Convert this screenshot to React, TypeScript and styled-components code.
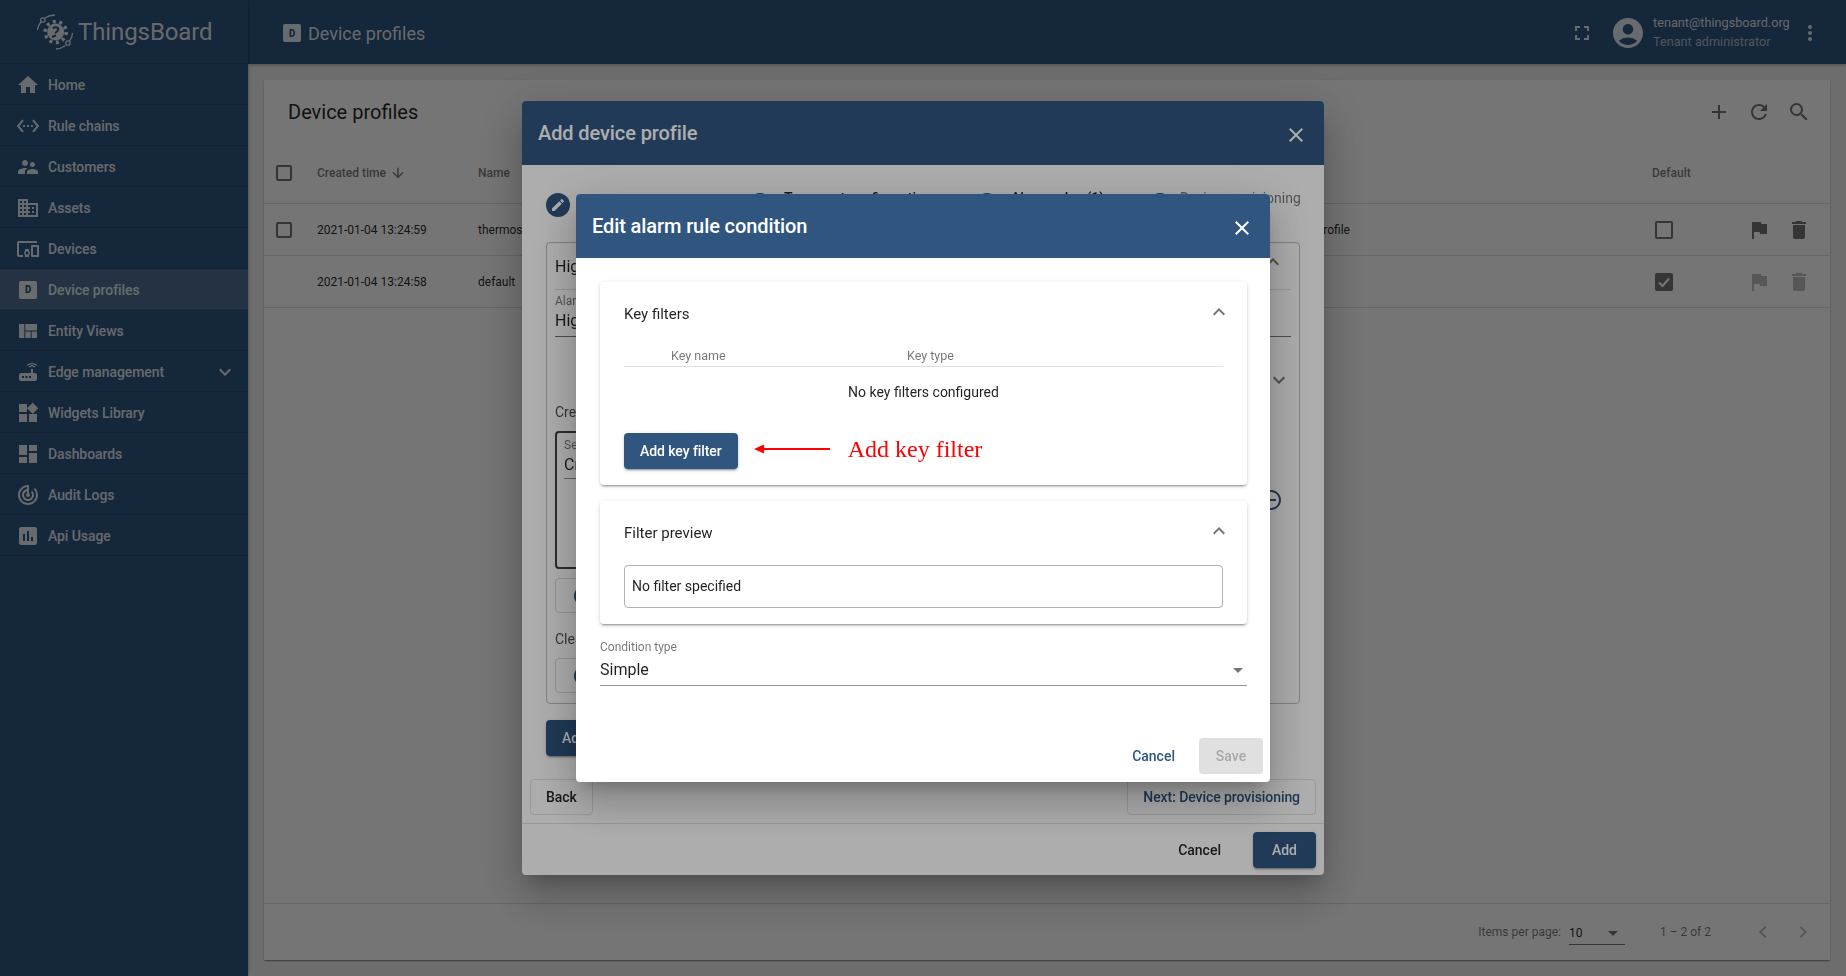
import React from "react";
import styled, { createGlobalStyle } from "styled-components";
import {
  MdHome, MdSettingsEthernet, MdSupervisorAccount, MdDomain, MdDevicesOther, MdViewQuilt, MdRouter,
  MdWidgets, MdDashboard, MdTrackChanges, MdAssessment, MdExpandMore, MdExpandLess, MdFullscreen,
  MdAccountCircle, MdMoreVert, MdAdd, MdRefresh, MdSearch, MdFlag, MdDelete, MdArrowDownward,
  MdArrowDropDown, MdChevronLeft, MdChevronRight, MdClose, MdEdit, MdRemoveCircleOutline, MdAddCircleOutline,
} from "react-icons/md";

const PRIMARY = "#305680";

const Global = createGlobalStyle`
  html, body { margin: 0; padding: 0; height: 100%; overflow: hidden; }
  body { font-family: Roboto, "Liberation Sans", sans-serif; background: #eeeeee; color: rgba(0,0,0,.87); font-size: 14px; }
  * { box-sizing: border-box; }
`;

const Shell = styled.div`
  display: grid;
  grid-template-columns: 248px 1fr;
  height: 976px;
`;
const Sidebar = styled.aside`
  background: ${PRIMARY};
  display: flex;
  flex-direction: column;
  box-shadow: 0 0 3px rgba(0,0,0,.4);
  z-index: 2;
`;
const Logo = styled.div`
  height: 64px;
  display: flex;
  align-items: center;
  padding-left: 36px;
  gap: 4px;
  color: rgba(255,255,255,.87);
  font-size: 24px;
  letter-spacing: -0.1px;
  border-bottom: 1px solid rgba(0,0,0,.12);
`;
const NavRow = styled.div<{ $active?: boolean }>`
  height: 41px;
  display: flex;
  align-items: center;
  padding: 1px 11px 0 16px;
  gap: 8px;
  font-weight: 500;
  font-size: 14px;
  letter-spacing: -0.08px;
  color: rgba(255,255,255,.87);
  border-bottom: 1px solid rgba(0,0,0,.12);
  background: ${(p) => (p.$active ? "rgba(255,255,255,.15)" : "transparent")};
  svg { flex: none; }
`;
const NavLabel = styled.span`
  flex: 1;
`;
const Badge = styled.span<{ $size: number }>`
  width: ${(p) => p.$size}px;
  height: ${(p) => p.$size}px;
  margin: 0 ${(p) => (24 - p.$size) / 2}px;
  background: rgba(255,255,255,.87);
  border-radius: 2px;
  color: ${PRIMARY};
  font-size: 11px;
  font-weight: 700;
  font-family: "DejaVu Sans Mono", monospace;
  display: flex;
  align-items: center;
  justify-content: center;
  flex: none;
`;
const Main = styled.main`
  display: flex;
  flex-direction: column;
  min-width: 0;
`;
const TopBar = styled.header`
  height: 64px;
  background: ${PRIMARY};
  color: rgba(255,255,255,.87);
  display: flex;
  align-items: center;
  padding: 2px 24px 0 32px;
  box-shadow: 0 1px 3px rgba(0,0,0,.3);
`;
const TopTitle = styled.div`
  flex: 1;
  display: flex;
  align-items: center;
  font-size: 18px;
  gap: 4px;
`;
const TopUser = styled.div`
  display: flex;
  flex-direction: column;
  gap: 5px;
  width: 145px;
  margin: -2px 0 0 7px;
  font-size: 12.7px;
  line-height: 14px;
  color: rgba(255,255,255,.85);
`;
const TopUserRole = styled.span`
  color: rgba(255,255,255,.6);
`;
const TopSpacer = styled.span`
  width: 16px;
`;
const Content = styled.div`
  flex: 1;
  padding: 16px;
  min-height: 0;
`;
const Card = styled.section`
  height: 100%;
  background: #fff;
  display: flex;
  flex-direction: column;
  box-shadow: 0 2px 1px -1px rgba(0,0,0,.2), 0 1px 1px 0 rgba(0,0,0,.14), 0 1px 3px 0 rgba(0,0,0,.12);
`;
const CardToolbar = styled.div`
  height: 64px;
  display: flex;
  align-items: center;
  padding: 0 11px 0 24px;
  font-size: 20px;
  flex: none;
`;
const CardTitle = styled.div`
  flex: 1;
`;
const IconCell = styled.span<{ $muted?: boolean }>`
  width: 40px;
  height: 40px;
  display: flex;
  align-items: center;
  justify-content: center;
  color: rgba(0,0,0,${(p) => (p.$muted ? 0.26 : 0.54)});
  flex: none;
`;
const TableRow = styled.div<{ $height: number; $lift?: number }>`
  height: ${(p) => p.$height}px;
  display: grid;
  grid-template-columns: 41px 161px 736px 438px 87px 40px 40px;
  align-items: center;
  padding: 0 0 ${(p) => p.$lift ?? 0}px 12px;
  border-bottom: 1px solid rgba(0,0,0,.12);
  font-size: 12px;
  flex: none;
`;
const HeadCell = styled.div`
  display: flex;
  align-items: center;
  gap: 4px;
  font-weight: 500;
  color: rgba(0,0,0,.54);
`;
const Check = styled.span<{ $size: number; $checked?: boolean; $inset?: number }>`
  width: ${(p) => p.$size}px;
  height: ${(p) => p.$size}px;
  margin-left: ${(p) => p.$inset ?? 0}px;
  border: ${(p) => (p.$checked ? "0" : "2px solid rgba(0,0,0,.54)")};
  border-radius: 2px;
  background: ${(p) => (p.$checked ? "rgba(0,0,0,.54)" : "transparent")};
  display: flex;
  align-items: center;
  justify-content: center;
`;
const CardFill = styled.div`
  flex: 1;
  border-bottom: 1px solid rgba(0,0,0,.12);
`;
const Pager = styled.footer`
  height: 56px;
  flex: none;
  display: flex;
  align-items: center;
  justify-content: flex-end;
  padding-right: 7px;
  font-size: 12px;
  color: rgba(0,0,0,.54);
`;
const PagerSelect = styled.div`
  width: 56px;
  height: 26px;
  margin: 0 35px 0 8px;
  display: flex;
  align-items: center;
  justify-content: space-between;
  color: rgba(0,0,0,.87);
  border-bottom: 1px solid rgba(0,0,0,.54);
  padding-top: 2px;
`;
const PagerRange = styled.span`
  margin-right: 32px;
`;
const Backdrop = styled.div`
  position: fixed;
  inset: 0;
  z-index: 10;
  background: rgba(0,0,0,.32);
  display: flex;
  align-items: center;
  justify-content: center;
`;
const Dialog = styled.div<{ $w: number; $h: number }>`
  width: ${(p) => p.$w}px;
  height: ${(p) => p.$h}px;
  background: #fff;
  border-radius: 4px;
  overflow: hidden;
  display: flex;
  flex-direction: column;
  box-shadow: 0 11px 15px -7px rgba(0,0,0,.2), 0 24px 38px 3px rgba(0,0,0,.14), 0 9px 46px 8px rgba(0,0,0,.12);
`;
const DialogHeader = styled.div`
  height: 64px;
  flex: none;
  background: ${PRIMARY};
  color: #fff;
  display: flex;
  align-items: center;
  justify-content: space-between;
  padding: 0 16px;
  font-size: 20px;
  font-weight: 500;
  letter-spacing: -0.1px;
  svg { margin-top: 4px; }
`;
const Stepper = styled.div`
  height: 77px;
  flex: none;
  display: flex;
  align-items: flex-start;
  padding: 23px 24px 0;
  font-size: 14px;
  line-height: 20px;
`;
const StepDot = styled.span<{ $gap: number }>`
  width: 24px;
  height: 24px;
  border-radius: 50%;
  background: ${PRIMARY};
  color: #fff;
  margin: 5px ${(p) => p.$gap}px 0 0;
  display: flex;
  align-items: center;
  justify-content: center;
  flex: none;
`;
const StepLabel = styled.span<{ $muted?: boolean; $w?: number; $low?: boolean }>`
  color: rgba(0,0,0,${(p) => (p.$muted ? 0.54 : 0.87)});
  font-weight: ${(p) => (p.$muted ? 400 : 500)};
  width: ${(p) => (p.$w ? `${p.$w}px` : "auto")};
  margin-top: ${(p) => (p.$low ? 8 : 0)}px;
  white-space: nowrap;
  flex: none;
`;
const Panel = styled.div`
  margin: 0 24px;
  border: 1px solid rgba(0,0,0,.25);
  border-radius: 4px;
  padding: 0 8px 10px;
  flex: none;
`;
const PanelHead = styled.div`
  height: 47px;
  display: flex;
  align-items: center;
  justify-content: space-between;
  border-bottom: 1px solid rgba(0,0,0,.12);
  font-size: 16px;
  color: rgba(0,0,0,.87);
  padding-right: 6px;
  svg { margin-top: -8px; }
`;
const Field = styled.div`
  padding: 4px 0 5px;
  border-bottom: 1px solid rgba(0,0,0,.54);
`;
const FieldLabel = styled.div`
  font-size: 12px;
  line-height: 14px;
  margin-bottom: 3px;
  color: rgba(0,0,0,.54);
`;
const FieldValue = styled.div`
  font-size: 16px;
  line-height: 20px;
  display: flex;
  align-items: center;
  justify-content: space-between;
`;
const ExpRow = styled.div`
  height: 24px;
  margin-top: 31px;
  display: flex;
  justify-content: flex-end;
  color: rgba(0,0,0,.54);
`;
const SectionLabel = styled.div<{ $top: number }>`
  font-size: 14px;
  line-height: 14px;
  margin: ${(p) => p.$top}px 0 12px;
  color: rgba(0,0,0,.7);
`;
const RuleRow = styled.div`
  display: flex;
  align-items: center;
  gap: 4px;
  color: ${PRIMARY};
  padding-right: 8px;
`;
const RuleBox = styled.div`
  flex: 1;
  height: 138px;
  border: 2px solid rgba(0,0,0,.75);
  border-radius: 4px;
  padding: 5px 7px;
  color: rgba(0,0,0,.87);
`;
const RuleField = styled.div`
  border-bottom: 1px solid rgba(0,0,0,.42);
  padding-bottom: 3px;
`;
const AddBox = styled.div<{ $top: number }>`
  height: 35px;
  margin: ${(p) => p.$top}px 36px 0 0;
  border: 1px solid rgba(0,0,0,.15);
  border-radius: 4px;
  padding-left: 16px;
  display: flex;
  align-items: center;
  color: ${PRIMARY};
`;
const RaisedButton = styled.button<{ $min?: number }>`
  height: 36px;
  min-width: ${(p) => p.$min ?? 64}px;
  padding: 0 16px;
  border: 0;
  border-radius: 4px;
  background: ${PRIMARY};
  color: #fff;
  font: 500 14px Roboto, sans-serif;
  letter-spacing: -0.07px;
  box-shadow: 0 3px 1px -2px rgba(0,0,0,.2), 0 2px 2px 0 rgba(0,0,0,.14), 0 1px 5px 0 rgba(0,0,0,.12);
  flex: none;
`;
const FlatButton = styled.button<{ $primary?: boolean }>`
  height: 36px;
  padding: 0 16px;
  border: 0;
  background: transparent;
  color: ${(p) => (p.$primary ? PRIMARY : "rgba(0,0,0,.87)")};
  font: 500 14px Roboto, sans-serif;
`;
const DisabledButton = styled.button`
  height: 36px;
  min-width: 64px;
  padding: 0 16px;
  border: 0;
  border-radius: 4px;
  background: #e0e0e0;
  color: rgba(0,0,0,.26);
  font: 500 14px Roboto, sans-serif;
`;
const StrokedButton = styled.button<{ $primary?: boolean }>`
  height: 36px;
  padding: 0 15px;
  border: 1px solid rgba(0,0,0,.12);
  border-radius: 4px;
  background: transparent;
  color: ${(p) => (p.$primary ? PRIMARY : "rgba(0,0,0,.87)")};
  font: 500 14px Roboto, sans-serif;
  letter-spacing: -0.07px;
`;
const AddRuleWrap = styled.div`
  margin: 16px 24px 0;
`;
const NavButtons = styled.div`
  margin-top: 23px;
  padding: 0 8px;
  display: flex;
  justify-content: space-between;
`;
const Actions = styled.div<{ $gap: number; $line?: boolean }>`
  margin-top: auto;
  padding: 8px ${(p) => (p.$line ? 8 : 7)}px ${(p) => (p.$line ? 7 : 8)}px 8px;
  display: flex;
  align-items: center;
  justify-content: flex-end;
  gap: ${(p) => p.$gap}px;
  border-top: ${(p) => (p.$line ? "1px solid rgba(0,0,0,.12)" : "0")};
`;
const Body = styled.div`
  padding: 24px 23px 0 24px;
`;
const FilterCard = styled.div<{ $top?: number }>`
  margin-top: ${(p) => p.$top ?? 0}px;
  padding: 22px 24px 16px;
  background: #fff;
  border-radius: 4px;
  box-shadow: 0 3px 1px -2px rgba(0,0,0,.2), 0 2px 2px 0 rgba(0,0,0,.14), 0 1px 5px 0 rgba(0,0,0,.12);
`;
const FilterTitle = styled.div`
  height: 20px;
  display: flex;
  align-items: center;
  justify-content: space-between;
  font-size: 15px;
  font-weight: 400;
  color: rgba(0,0,0,.87);
  svg { margin: -5px -8px 0 0; color: rgba(0,0,0,.54); }
`;
const KeyHead = styled.div`
  margin-top: 22px;
  height: 21px;
  display: grid;
  grid-template-columns: 236px 1fr;
  padding: 0 0 2px 47px;
  align-items: center;
  font-size: 12.500px;
  color: rgba(0,0,0,.54);
  border-bottom: 1px solid rgba(0,0,0,.12);
`;
const EmptyRow = styled.div`
  height: 50px;
  display: flex;
  align-items: center;
  justify-content: center;
  font-size: 14px;
  margin-bottom: 16px;
`;
const ButtonRow = styled.div`
  display: flex;
  align-items: center;
`;
const Note = styled.span`
  margin-left: 18px;
  margin-top: -3px;
  font-family: "Liberation Serif", serif;
  font-size: 24px;
  color: #ff0000;
`;
const ArrowSvg = styled.svg`
  margin-left: 16px;
  margin-top: -4px;
  flex: none;
`;
const PreviewBox = styled.div`
  height: 43px;
  margin-top: 22px;
  padding: 0 7px 2px;
  border: 1px solid rgba(0,0,0,.3);
  border-radius: 4px;
  display: flex;
  align-items: center;
  font-size: 14px;
`;
const ConditionField = styled.div`
  margin-top: 16px;
  padding-bottom: 3px;
  border-bottom: 1px solid rgba(0,0,0,.42);
  svg { color: rgba(0,0,0,.54); margin-right: -3px; }
`;
const ConditionLabel = styled(FieldLabel)`
  margin-bottom: 4px;
`;

function LogoMark() {
  return (
    <svg width="38" height="38" viewBox="0 0 38 38" fill="none" stroke="currentColor">
      <path d="M1.5 17C2 14 3 11 5 9M9 5C12 3 15 2 19 2" strokeWidth="1.3" />
      <circle cx="6.8" cy="7" r="2.2" strokeWidth="1.3" />
      <path d="M20 36C23 36 26 35 29.5 32.5M33.5 28C35.500 25.500 36.500 23 36.500 20" strokeWidth="1.3" />
      <circle cx="32" cy="30" r="2.2" strokeWidth="1.3" />
      <circle cx="19.700" cy="19" r="8.500" fill="currentColor" stroke="none" />
      <circle cx="19.700" cy="19" r="10.500" strokeWidth="3.500" strokeDasharray="3 3.600" />
      <path d="M17 15.500C18 13.500 22.500 14 22.300 16.500C22.100 18.500 19.500 18.500 19.500 20.500M16 24L20 22.500" stroke={PRIMARY} strokeWidth="2" />
    </svg>
  );
}

const nav: [React.ReactNode, string, boolean?, boolean?][] = [
  [<MdHome size={24} />, "Home"],
  [<MdSettingsEthernet size={24} />, "Rule chains"],
  [<MdSupervisorAccount size={24} />, "Customers"],
  [<MdDomain size={24} />, "Assets"],
  [<MdDevicesOther size={24} />, "Devices"],
  [<Badge $size={18}>D</Badge>, "Device profiles", true],
  [<MdViewQuilt size={24} />, "Entity Views"],
  [<MdRouter size={24} />, "Edge management", false, true],
  [<MdWidgets size={24} />, "Widgets Library"],
  [<MdDashboard size={24} />, "Dashboards"],
  [<MdTrackChanges size={24} />, "Audit Logs"],
  [<MdAssessment size={24} />, "Api Usage"],
];

export default function App() {
  return (
    <>
      <Global />
      <Shell>
        <Sidebar>
          <Logo>
            <LogoMark />
            <span>ThingsBoard</span>
          </Logo>
          {nav.map(([icon, label, active, more]) => (
            <NavRow key={label} $active={active}>
              {icon}
              <NavLabel>{label}</NavLabel>
              {more && <MdExpandMore size={24} />}
            </NavRow>
          ))}
        </Sidebar>
        <Main>
          <TopBar>
            <TopTitle>
              <Badge $size={18}>D</Badge>
              <span>Device profiles</span>
            </TopTitle>
            <MdFullscreen size={24} />
            <TopSpacer />
            <MdAccountCircle size={36} color="rgba(255,255,255,.87)" />
            <TopUser>
              <span>tenant@thingsboard.org</span>
              <TopUserRole>Tenant administrator</TopUserRole>
            </TopUser>
            <MdMoreVert size={24} />
          </TopBar>
          <Content>
            <Card>
              <CardToolbar>
                <CardTitle>Device profiles</CardTitle>
                <IconCell><MdAdd size={24} /></IconCell>
                <IconCell><MdRefresh size={24} /></IconCell>
                <IconCell><MdSearch size={24} /></IconCell>
              </CardToolbar>
              <TableRow $height={60} $lift={2}>
                <Check $size={16} />
                <HeadCell>Created time <MdArrowDownward size={16} /></HeadCell>
                <HeadCell>Name</HeadCell>
                <HeadCell>Description</HeadCell>
                <HeadCell>Default</HeadCell>
              </TableRow>
              <TableRow $height={52}>
                <Check $size={16} />
                <div>2021-01-04 13:24:59</div>
                <div>thermostat</div>
                <div>Thermostat device profile</div>
                <Check $size={18} $inset={3} />
                <IconCell><MdFlag size={24} /></IconCell>
                <IconCell><MdDelete size={24} /></IconCell>
              </TableRow>
              <TableRow $height={52}>
                <span />
                <div>2021-01-04 13:24:58</div>
                <div>default</div>
                <div />
                <Check $size={18} $inset={3} $checked>
                  <svg width="14" height="14" viewBox="0 0 14 14" fill="none" stroke="#fff" strokeWidth="2">
                    <path d="M2 7.500L5.500 11L12 3.500" />
                  </svg>
                </Check>
                <IconCell $muted><MdFlag size={24} /></IconCell>
                <IconCell $muted><MdDelete size={24} /></IconCell>
              </TableRow>
              <CardFill />
              <Pager>
                <span>Items per page:</span>
                <PagerSelect>
                  <span>10</span>
                  <MdArrowDropDown size={24} color="rgba(0,0,0,.54)" />
                </PagerSelect>
                <PagerRange>1 – 2 of 2</PagerRange>
                <IconCell $muted><MdChevronLeft size={24} /></IconCell>
                <IconCell $muted><MdChevronRight size={24} /></IconCell>
              </Pager>
            </Card>
          </Content>
        </Main>
      </Shell>

      <Backdrop>
        <Dialog $w={802} $h={774}>
          <DialogHeader>
            <span>Add device profile</span>
            <MdClose size={24} />
          </DialogHeader>
          <Stepper>
            <StepDot $gap={8}><MdEdit size={16} /></StepDot>
            <StepLabel $w={170} $low>Device details</StepLabel>
            <StepDot $gap={12} />
            <StepLabel $w={191}>Transport configuration</StepLabel>
            <StepDot $gap={12} />
            <StepLabel $w={137}>Alarm rules (1)</StepLabel>
            <StepDot $gap={8} />
            <StepLabel $muted>Device provisioning</StepLabel>
          </Stepper>
          <Panel>
            <PanelHead>High Temperature<MdExpandLess size={24} color="rgba(0,0,0,.54)" /></PanelHead>
            <Field>
              <FieldLabel>Alarm type</FieldLabel>
              <FieldValue>High Temperature</FieldValue>
            </Field>
            <ExpRow><MdExpandMore size={24} /></ExpRow>
            <SectionLabel $top={13}>Create alarm conditions</SectionLabel>
            <RuleRow>
              <RuleBox>
                <RuleField>
                  <FieldLabel>Severity</FieldLabel>
                  <FieldValue>Critical</FieldValue>
                </RuleField>
              </RuleBox>
              <MdRemoveCircleOutline size={24} />
            </RuleRow>
            <AddBox $top={9}><MdAddCircleOutline size={24} /></AddBox>
            <SectionLabel $top={19}>Clear alarm condition</SectionLabel>
            <AddBox $top={0}><MdAddCircleOutline size={24} /></AddBox>
          </Panel>
          <AddRuleWrap><RaisedButton>Add alarm</RaisedButton></AddRuleWrap>
          <NavButtons>
            <StrokedButton>Back</StrokedButton>
            <StrokedButton $primary>Next: Device provisioning</StrokedButton>
          </NavButtons>
          <Actions $gap={16} $line>
            <FlatButton>Cancel</FlatButton>
            <RaisedButton $min={63}>Add</RaisedButton>
          </Actions>
        </Dialog>
      </Backdrop>

      <Backdrop>
        <Dialog $w={694} $h={588}>
          <DialogHeader>
            <span>Edit alarm rule condition</span>
            <MdClose size={24} />
          </DialogHeader>
          <Body>
            <FilterCard>
              <FilterTitle>Key filters<MdExpandLess size={24} /></FilterTitle>
              <KeyHead>
                <span>Key name</span>
                <span>Key type</span>
              </KeyHead>
              <EmptyRow>No key filters configured</EmptyRow>
              <ButtonRow>
                <RaisedButton>Add key filter</RaisedButton>
                <ArrowSvg width="76" height="10" viewBox="0 0 76 10">
                  <path d="M0 5L10 0.500V4H76V6H10V9.500Z" fill="#ff0000" />
                </ArrowSvg>
                <Note>Add key filter</Note>
              </ButtonRow>
            </FilterCard>
            <FilterCard $top={16}>
              <FilterTitle>Filter preview<MdExpandLess size={24} /></FilterTitle>
              <PreviewBox>No filter specified</PreviewBox>
            </FilterCard>
            <ConditionField>
              <ConditionLabel>Condition type</ConditionLabel>
              <FieldValue>Simple<MdArrowDropDown size={24} /></FieldValue>
            </ConditionField>
          </Body>
          <Actions $gap={8}>
            <FlatButton $primary>Cancel</FlatButton>
            <DisabledButton>Save</DisabledButton>
          </Actions>
        </Dialog>
      </Backdrop>
    </>
  );
}
